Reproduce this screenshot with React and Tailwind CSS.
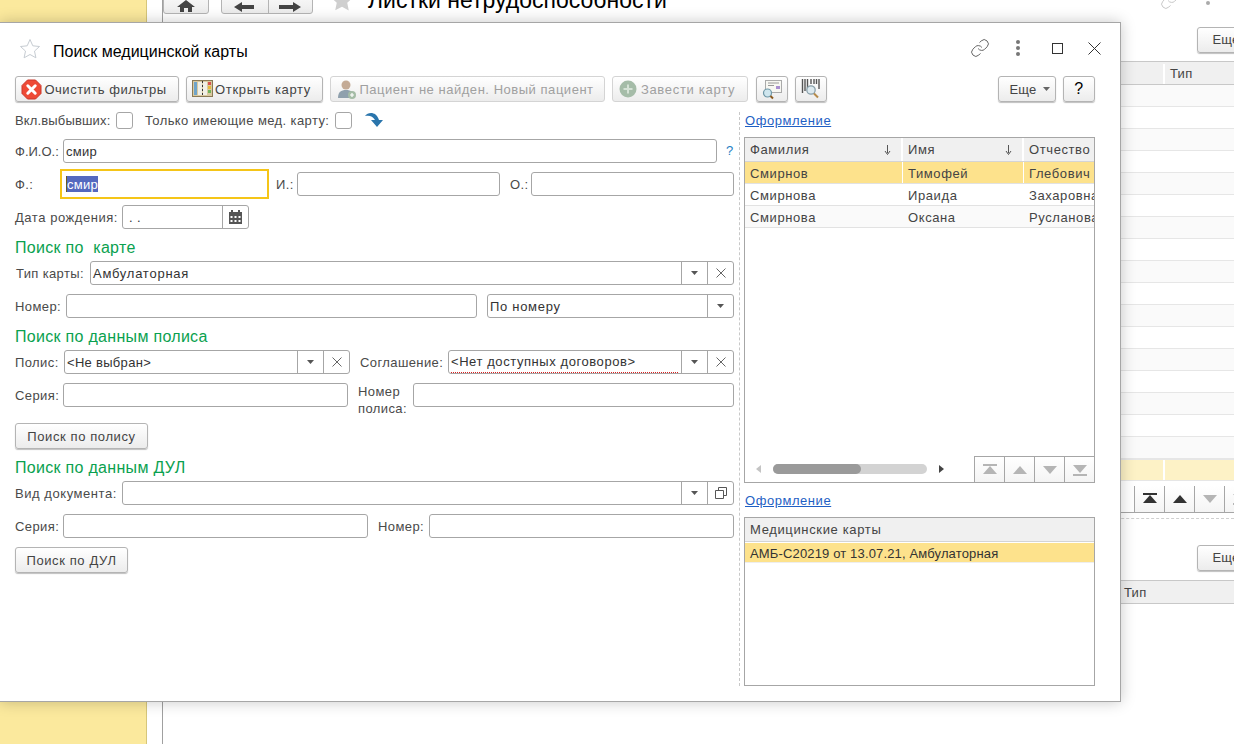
import { Link } from "lucide-react";

const btnBase =
  "flex items-center justify-center shrink-0 rounded-[3px] border bg-gradient-to-b from-white to-[#ececec]";
const btnCls = `${btnBase} h-[26px] border-[#b4b4b4] shadow-[0_1px_1px_rgba(0,0,0,0.25)] text-[#444]`;
const btnOff = `${btnBase} h-[26px] border-[#d4d4d4] text-[#a0a0a0]`;
const inputCls = "flex items-center h-[24px] rounded-[3px] border border-[#a6a6a6] bg-white text-[#333]";

const ClearIcon = () => (
  <svg width="21" height="21" viewBox="0 0 21 21" className="mr-[2px]">
    <path d="M6.500 1h8L20 6.500v8L14.500 20h-8L1 14.500v-8z" fill="#ee4a36" stroke="#c9362a" />
    <path d="M6.800 6.800l7.400 7.400M14.200 6.800l-7.400 7.400" stroke="#fff" strokeWidth="3" strokeLinecap="round" />
  </svg>
);

const CardIcon = () => (
  <svg width="21" height="20" viewBox="0 0 21 20" className="mr-[2px]">
    <rect x="0.500" y="1.500" width="20" height="16" fill="#d9c9a0" stroke="#8a7a55" />
    <rect x="2" y="3" width="3" height="13" fill="#6fa4c9" />
    <rect x="6" y="3" width="4" height="13" fill="#f0efe6" />
    <rect x="11" y="3" width="4" height="13" fill="#f0efe6" />
    <rect x="16" y="3" width="3" height="3" fill="#d9534f" />
    <rect x="16" y="7" width="3" height="3" fill="#e8b93c" />
    <rect x="16" y="11" width="3" height="3" fill="#6fb35a" />
    <path d="M10.500 2v15" stroke="#333" strokeDasharray="2 2" />
  </svg>
);

const PatientIcon = () => (
  <svg width="20" height="21" viewBox="0 0 20 21" className="mr-[2px]">
    <circle cx="9" cy="6" r="4.500" fill="#c4ab96" />
    <path d="M1 19c0-6 3-8 8-8s8 2 8 8z" fill="#8fa0ad" />
    <circle cx="15" cy="16" r="4" fill="#a4bca6" />
    <path d="M15 14v4M13 16h4" stroke="#fff" strokeWidth="1.200" />
  </svg>
);

const AddIcon = () => (
  <svg width="18" height="18" viewBox="0 0 18 18" className="mr-[4px]">
    <circle cx="9" cy="9" r="8.500" fill="#a5bca8" />
    <path d="M9 4.500v9M4.500 9h9" stroke="#d5e2d6" strokeWidth="2" />
  </svg>
);

const DocSearchIcon = () => (
  <svg width="22" height="22" viewBox="0 0 22 22">
    <rect x="4.500" y="2.500" width="16" height="12" fill="#f7f7f2" stroke="#aaa" />
    <path d="M7 5h11M7 7.500h6" stroke="#999" />
    <rect x="15" y="8" width="4" height="3" fill="#a98fd0" />
    <circle cx="6.500" cy="15" r="4" fill="#cfe6ee" stroke="#6f97a6" strokeWidth="1.200" />
    <path d="M9.500 18l2.500 2.500" stroke="#8a5a20" strokeWidth="2" />
  </svg>
);

const BarcodeIcon = () => (
  <svg width="22" height="22" viewBox="0 0 22 22">
    <path d="M2.500 1v14M5 1v12M7.500 1v9M11 1v5M14 1v5M16.500 1v5M19 1v10" stroke="#555" strokeWidth="1.400" />
    <circle cx="11" cy="12" r="4.200" fill="#dce9ef" stroke="#8aa0aa" strokeWidth="1.300" />
    <path d="M14 15.500l4 4" stroke="#b58a4a" strokeWidth="2" />
  </svg>
);

const RedoIcon = () => (
  <svg width="18" height="16" viewBox="0 0 18 16">
    <path d="M0 4C3 0 11-1 14 8h4l-6 7-6-7h4C8 4 4 3 0 4z" fill="#2a75ac" />
  </svg>
);

const Caret = () => (
  <svg width="7" height="4" viewBox="0 0 7 4">
    <path d="M0 0h7L3.500 4z" fill="#555" />
  </svg>
);

const Cross = () => (
  <svg width="10" height="10" viewBox="0 0 10 10">
    <path d="M.5.500l9 9M9.500.500l-9 9" stroke="#666" />
  </svg>
);

const IconBox = ({ children }) => (
  <div className="flex items-center justify-center w-[26px] h-full shrink-0 border-l border-[#a6a6a6]">{children}</div>
);

const Field = ({ className = "", textCls = "", value, children, dotted }) => (
  <div className={`${inputCls} ${className}`}>
    {dotted ? (
      <div className={`flex-1 min-w-0 h-[22px] ml-[2px] mr-[3px] leading-[22px] border-b border-dotted border-[#d81e1e] ${textCls}`}>
        {value}
      </div>
    ) : (
      <div className={`flex-1 min-w-0 pl-[2px] pt-[2px] whitespace-pre ${textCls}`}>{value}</div>
    )}
    {children}
  </div>
);

const Label = ({ className = "", children }) => <span className={`shrink-0 text-[#4a4a4a] pt-[2px] ${className}`}>{children}</span>;

const BtnText = ({ className = "", children }) => <span className={`pt-[2px] ${className}`}>{children}</span>;

const Heading = ({ children }) => (
  <div className="h-[20px] mt-[8px] leading-[22px] text-[16px] tracking-[0.3px] text-[#0aa14f] whitespace-pre">{children}</div>
);

const NavIcon = ({ kind, color }) => (
  <svg width="14" height="12" viewBox="0 0 14 12">
    {kind === "first" && <path d="M0 0h14v2H0zM7 2l7 8H0z" fill={color} />}
    {kind === "up" && <path d="M7 2l7 8H0z" fill={color} />}
    {kind === "down" && <path d="M0 2h14L7 10z" fill={color} />}
    {kind === "last" && <path d="M0 1h14L7 9zM0 10h14v2H0z" fill={color} />}
  </svg>
);

const NavCell = ({ kind, color }) => (
  <div className="flex items-center justify-center w-[30px] h-full shrink-0 border-l border-[#a6a6a6] bg-gradient-to-b from-white to-[#f4f4f4]">
    <NavIcon kind={kind} color={color} />
  </div>
);

const SortArrow = () => (
  <svg width="7" height="10" viewBox="0 0 7 10" className="ml-auto mr-[10px]">
    <path d="M3.500 0v8M1 6l2.500 3.500L6 6" fill="none" stroke="#555" />
  </svg>
);

const patients = [
  ["Смирнов", "Тимофей", "Глебович"],
  ["Смирнова", "Ираида", "Захаровна"],
  ["Смирнова", "Оксана", "Русланова"],
];

const PatientTable = () => (
  <div className="flex flex-col h-[346px] mt-[9px] w-[351px] border border-[#a6a6a6] text-[#444] tracking-[0.6px]">
    <div className="flex h-[24px] shrink-0 border-b border-[#d4d4d4]">
      <div className="flex items-center w-[158px] pl-[5px] bg-[#f0f0f0] border-r-2 border-white">
        Фамилия
        <SortArrow />
      </div>
      <div className="flex items-center w-[121px] pl-[5px] bg-[#f0f0f0] border-r-2 border-white">
        Имя
        <SortArrow />
      </div>
      <div className="flex items-center flex-1 pl-[5px] bg-[#f0f0f0] overflow-hidden">Отчество</div>
    </div>
    {patients.map((row, i) => (
      <div
        key={row[2]}
        className={`flex h-[22px] shrink-0 border-b border-[#e2e2e2] leading-[23px] ${
          i === 0 ? "bg-[#fde28c]" : i === 2 ? "bg-[#fafafa]" : "bg-white"
        }`}
      >
        <div className={`w-[158px] pl-[5px] ${i === 0 ? "border-r border-white" : ""}`}>{row[0]}</div>
        <div className={`w-[121px] pl-[5px] ${i === 0 ? "border-r border-white" : ""}`}>{row[1]}</div>
        <div className="flex-1 min-w-0 pl-[5px] overflow-hidden whitespace-nowrap">{row[2]}</div>
      </div>
    ))}
    <div className="flex items-stretch h-[26px] mt-auto">
      <div className="flex items-center flex-1 pl-[11px]">
        <svg width="5" height="8" viewBox="0 0 5 8">
          <path d="M5 0v8L0 4z" fill="#c4c4c4" />
        </svg>
        <div className="w-[154px] h-[10px] ml-[12px] rounded-full bg-[#d3d3d3]">
          <div className="w-[88px] h-full rounded-full bg-[#9a9a9a]" />
        </div>
        <svg width="5" height="8" viewBox="0 0 5 8" className="ml-[12px]">
          <path d="M0 0v8l5-4z" fill="#444" />
        </svg>
      </div>
      <div className="flex border-t border-[#a6a6a6] h-[26px]">
        <NavCell kind="first" color="#b5b5b5" />
        <NavCell kind="up" color="#b5b5b5" />
        <NavCell kind="down" color="#b5b5b5" />
        <NavCell kind="last" color="#b5b5b5" />
      </div>
    </div>
  </div>
);

const Modal = () => (
  <div className="absolute left-0 top-[22px] w-[1121px] h-[680px] bg-white border border-l-0 border-[#a6a6a6] shadow-[0_0_14px_rgba(0,0,0,0.22)] text-[13px] tracking-[0.4px]">
    <div className="flex items-center h-[53px] pb-[3px] pl-[19px] pr-[19px]">
      <svg width="22" height="21" viewBox="0 0 22 21">
        <path d="M11 1.500l2.800 6.300 6.700.7-5 4.600 1.400 6.700L11 16.500l-5.900 3.300 1.400-6.700-5-4.600 6.700-.7z" fill="none" stroke="#c6ccd2" />
      </svg>
      <div className="ml-[12px] mt-[8px] text-[16px] tracking-normal text-black">Поиск медицинской карты</div>
      <div className="flex items-center ml-auto">
        <Link size={20} strokeWidth={1.200} className="text-[#666]" />
        <div className="flex flex-col gap-[2px] ml-[26px]">
          <span className="w-[4px] h-[4px] rounded-full bg-[#777]" />
          <span className="w-[4px] h-[4px] rounded-full bg-[#777]" />
          <span className="w-[4px] h-[4px] rounded-full bg-[#777]" />
        </div>
        <div className="w-[11px] h-[11px] ml-[32px] border-[1.500px] border-[#333]" />
        <svg width="13" height="13" viewBox="0 0 13 13" className="ml-[25px]">
          <path d="M.5.500l12 12M12.500.500l-12 12" stroke="#333" />
        </svg>
      </div>
    </div>

    <div className="flex h-[26px] pl-[15px]">
      <button className={`${btnCls} w-[164px] pr-[6px]`}>
        <ClearIcon />
        <BtnText className="tracking-[0.5px]">Очистить фильтры</BtnText>
      </button>
      <button className={`${btnCls} w-[137px] ml-[7px] pr-[6px]`}>
        <CardIcon />
        <BtnText className="tracking-[0.65px]">Открыть карту</BtnText>
      </button>
      <button className={`${btnOff} w-[275px] ml-[7px] pr-[4px]`}>
        <PatientIcon />
        <BtnText className="tracking-[0.53px]">Пациент не найден. Новый пациент</BtnText>
      </button>
      <button className={`${btnOff} w-[136px] ml-[7px] pr-[6px]`}>
        <AddIcon />
        <BtnText className="tracking-[0.7px]">Завести карту</BtnText>
      </button>
      <button className={`${btnCls} w-[32px] ml-[8px]`}>
        <DocSearchIcon />
      </button>
      <button className={`${btnCls} w-[32px] ml-[7px]`}>
        <BarcodeIcon />
      </button>
      <button className={`${btnCls} w-[58px] ml-[171px] pl-[5px]`}>
        <BtnText className="tracking-[0.25px]">Еще</BtnText>
        <span className="ml-[6px]">
          <svg width="7" height="4" viewBox="0 0 7 4">
            <path d="M0 0h7L3.500 4z" fill="#666" />
          </svg>
        </span>
      </button>
      <button className={`${btnCls} w-[32px] ml-[7px]`}>
        <span className="text-[16px] text-black">?</span>
      </button>
    </div>

    <div className="flex mt-[8px]">
      <div className="w-[719px] ml-[15px] shrink-0">
        <div className="flex items-center h-[20px]">
          <Label className="w-[101px] tracking-[0.15px]">Вкл.выбывших:</Label>
          <div className="w-[17px] h-[17px] rounded-[3px] border border-[#a6a6a6]" />
          <Label className="ml-[12px] w-[190px]">Только имеющие мед. карту:</Label>
          <div className="w-[17px] h-[17px] rounded-[3px] border border-[#a6a6a6]" />
          <span className="ml-[13px]">
            <RedoIcon />
          </span>
        </div>

        <div className="flex items-center mt-[9px]">
          <Label className="w-[48px] tracking-[0px]">Ф.И.О.:</Label>
          <Field className="w-[654px]" textCls="tracking-[0.25px]" value="смир" />
          <span className="ml-[9px] text-[#1f7fc4]">?</span>
        </div>

        <div className="flex items-center mt-[6px]">
          <Label className="w-[45px]">Ф.:</Label>
          <div className="flex items-center w-[209px] h-[30px] shrink-0 border-2 border-[#f5c518] pl-[4px]">
            <span className="h-[16px] leading-[17px] tracking-[0.25px] bg-[#5468bf] text-white border-l border-[#6b5a1f]">смир</span>
          </div>
          <Label className="ml-[7px] w-[21px]">И.:</Label>
          <Field className="w-[203px]" />
          <Label className="ml-[10px] w-[21px]">О.:</Label>
          <Field className="w-[203px]" />
        </div>

        <div className="flex items-center mt-[6px]">
          <Label className="w-[107px] tracking-[0.55px]">Дата рождения:</Label>
          <Field className="w-[127px]" value=" . .">
            <div className="flex items-center justify-center w-[26px] h-full shrink-0 border-l border-[#a6a6a6]">
              <svg width="13" height="14" viewBox="0 0 13 14">
                <path d="M0 2h13v12H0z" fill="#555" />
                <path d="M3 0v3M10 0v3" stroke="#555" strokeWidth="2" />
                <path d="M1.500 6h2v2h-2zM5.500 6h2v2h-2zM9.500 6h2v2h-2zM1.500 10h2v2h-2zM5.500 10h2v2h-2zM9.500 10h2v2h-2z" fill="#fff" />
              </svg>
            </div>
          </Field>
        </div>

        <Heading>Поиск по  карте</Heading>
        <div className="flex items-center mt-[4px]">
          <Label className="w-[75px] pl-[1px] tracking-[0.35px]">Тип карты:</Label>
          <Field className="flex-1" textCls="tracking-[0.75px]" value="Амбулаторная">
            <IconBox>
              <Caret />
            </IconBox>
            <IconBox>
              <Cross />
            </IconBox>
          </Field>
        </div>
        <div className="flex items-center mt-[9px]">
          <Label className="w-[51px]">Номер:</Label>
          <Field className="w-[411px]" />
          <Field className="flex-1 ml-[10px]" textCls="tracking-[0.7px]" value="По номеру">
            <IconBox>
              <Caret />
            </IconBox>
          </Field>
        </div>

        <Heading>Поиск по данным полиса</Heading>
        <div className="flex items-center mt-[4px]">
          <Label className="w-[49px]">Полис:</Label>
          <Field className="w-[286px]" textCls="tracking-[0.3px]" value="<Не выбран>">
            <IconBox>
              <Caret />
            </IconBox>
            <IconBox>
              <Cross />
            </IconBox>
          </Field>
          <Label className="ml-[10px] w-[88px]">Соглашение:</Label>
          <Field className="flex-1" textCls="tracking-[0.57px]" value="<Нет доступных договоров>" dotted>
            <IconBox>
              <Caret />
            </IconBox>
            <IconBox>
              <Cross />
            </IconBox>
          </Field>
        </div>
        <div className="flex items-center h-[24px] mt-[9px]">
          <Label className="w-[48px]">Серия:</Label>
          <Field className="w-[285px]" />
          <Label className="ml-[10px] w-[55px] self-start -mt-[2px] leading-[17px]">
            Номер
            <br />
            полиса:
          </Label>
          <Field className="flex-1" />
        </div>
        <button className={`${btnCls} w-[133px] mt-[16px]`}>
          <BtnText className="tracking-[0.6px]">Поиск по полису</BtnText>
        </button>

        <Heading>Поиск по данным ДУЛ</Heading>
        <div className="flex items-center mt-[4px]">
          <Label className="w-[107px] tracking-[0.55px]">Вид документа:</Label>
          <Field className="flex-1">
            <IconBox>
              <Caret />
            </IconBox>
            <IconBox>
              <svg width="12" height="12" viewBox="0 0 12 12" fill="none" stroke="#555">
                <path d="M3.500 3.500V.5h8v8h-3" />
                <path d="M.5 3.500h8v8h-8z" />
              </svg>
            </IconBox>
          </Field>
        </div>
        <div className="flex items-center mt-[9px]">
          <Label className="w-[48px]">Серия:</Label>
          <Field className="w-[305px]" />
          <Label className="ml-[10px] w-[51px]">Номер:</Label>
          <Field className="flex-1" />
        </div>
        <button className={`${btnCls} w-[113px] mt-[9px]`}>
          <BtnText className="tracking-[0.6px]">Поиск по ДУЛ</BtnText>
        </button>
      </div>

      <div className="h-[574px] mt-[2px] ml-[5px] pl-[4px] border-l border-dashed border-[#c8c8c8]">
        <a className="block h-[16px] ml-[1px] leading-[18px] tracking-[0.55px] text-[#1f5fc4] underline">Оформление</a>
        <PatientTable />
        <a className="block h-[16px] ml-[1px] mt-[9px] leading-[18px] tracking-[0.55px] text-[#1f5fc4] underline">Оформление</a>
        <div className="h-[169px] mt-[9px] w-[351px] border border-[#a6a6a6] text-[#444]">
          <div className="flex items-center h-[24px] pl-[5px] bg-[#f0f0f0] border-b border-[#d4d4d4] tracking-[0.65px]">Медицинские карты</div>
          <div className="flex items-center h-[20px] mt-[1px] pt-[2px] pl-[5px] bg-[#fde28c] border-b border-[#eeeeee] text-[#333] tracking-[0.15px]">
            АМБ-С20219 от 13.07.21, Амбулаторная
          </div>
        </div>
      </div>
    </div>
  </div>
);

const listRows = Array.from({ length: 17 }, (_, i) => i);

const Background = () => (
  <div className="flex h-[744px] overflow-hidden bg-white text-[13px] text-[#444] tracking-[0.25px]">
    <div className="w-[147px] shrink-0 bg-[#fbe99d] border-r border-[#d6c67a]" />
    <div className="w-[16px] shrink-0 border-r border-[#a0a0a0]" />
    <div className="flex-1 min-w-0">
      <div className="flex items-center h-[28px] -mt-[14px]">
        <button className={`${btnBase} h-[28px] border-[#b4b4b4] w-[46px]`}>
          <svg width="18" height="12" viewBox="0 0 18 12" className="mt-[12px]">
            <path d="M9 0l9 7h-3v5h-4V8H7v4H3V7H0z" fill="#444" />
          </svg>
        </button>
        <button className={`${btnBase} h-[28px] border-[#b4b4b4] w-[92px] ml-[12px]`}>
          <svg width="24" height="10" viewBox="0 0 24 10" className="mt-[14px]">
            <path d="M0 5l8-5v3h12v4H8v3z" fill="#444" />
          </svg>
          <span className="w-px h-full mx-[10px] bg-[#b4b4b4]" />
          <svg width="22" height="10" viewBox="0 0 22 10" className="mt-[14px]">
            <path d="M22 5l-8-5v3H0v4h14v3z" fill="#444" />
          </svg>
        </button>
        <svg width="24" height="24" viewBox="0 0 22 21" className="ml-[17px]">
          <path d="M11 1l3 6.500 7 .8-5.200 4.800 1.400 7L11 16.600 4.800 20l1.400-7L1 8.300l7-.8z" fill="#cfcfcf" />
        </svg>
        <div className="ml-[14px] text-[23px] tracking-normal text-black whitespace-nowrap">Листки нетрудоспособности</div>
        <Link size={20} strokeWidth={1.200} className="ml-auto text-[#c8c8c8]" />
        <div className="flex flex-col gap-[2px] ml-[26px] mr-[24px]">
          <span className="w-[4px] h-[4px] rounded-full bg-[#aaa]" />
          <span className="w-[4px] h-[4px] rounded-full bg-[#aaa]" />
        </div>
      </div>
      <div className="h-[26px] mt-[13px] pl-[1034px]">
        <button className={`${btnCls} w-[58px]`}>Еще</button>
      </div>
      <div className="flex items-center h-[24px] mt-[8px] pt-[2px] border-y border-[#c8c8c8] bg-[#f0f0f0]">
        <div className="w-[1002px] h-full border-r-2 border-white" />
        <div className="pl-[5px]">Тип</div>
      </div>
      {listRows.map((i) => (
        <div key={i} className={`h-[22px] border-b border-[#e6e6e6] ${i % 2 ? "bg-white" : "bg-[#fafafa]"}`} />
      ))}
      <div className="flex h-[22px] bg-[#fdf2c6] border-y border-[#e6e6e6]">
        <div className="w-[1002px] border-r-2 border-white" />
      </div>
      <div className="flex h-[27px] mt-[5px] pl-[971px] border-b border-[#a6a6a6]">
        <NavCell kind="first" color="#333" />
        <NavCell kind="up" color="#333" />
        <NavCell kind="down" color="#b5b5b5" />
        <NavCell kind="last" color="#b5b5b5" />
      </div>
      <div className="h-0 mt-[5px] border-t border-dashed border-[#d0d0d0]" />
      <div className="h-[26px] mt-[26px] pl-[1034px]">
        <button className={`${btnCls} w-[58px]`}>Еще</button>
      </div>
      <div className="flex items-center h-[24px] mt-[9px] pl-[961px] pt-[2px] border-y border-[#c8c8c8] bg-[#f0f0f0]">Тип</div>
    </div>
  </div>
);

export default function App() {
  return (
    <div className="relative h-[744px] overflow-hidden font-['Liberation_Sans',Arial,sans-serif]">
      <Background />
      <Modal />
    </div>
  );
}
